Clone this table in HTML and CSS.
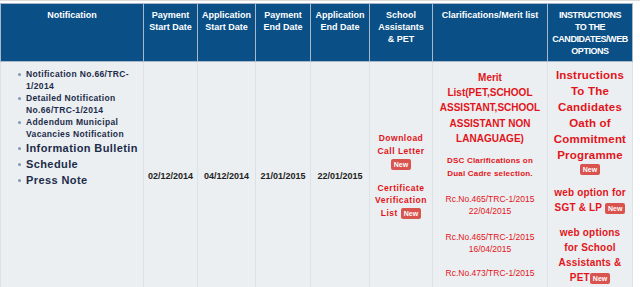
FILE: index.html
```html
<!DOCTYPE html>
<html>
<head>
<meta charset="utf-8">
<title>TRC-1/2014 Notification</title>
<link rel="stylesheet" href="styles.css">
</head>
<body>
<div class="page">
  <table class="grid">
    <colgroup>
      <col class="c-notif">
      <col class="c-pstart">
      <col class="c-astart">
      <col class="c-pend">
      <col class="c-aend">
      <col class="c-school">
      <col class="c-clar">
      <col class="c-instr">
    </colgroup>
    <thead>
      <tr>
        <th>Notification</th>
        <th>Payment<br>Start Date</th>
        <th>Application<br>Start Date</th>
        <th>Payment<br>End Date</th>
        <th>Application<br>End Date</th>
        <th>School<br>Assistants<br>&amp; PET</th>
        <th>Clarifications/Merit list</th>
        <th class="th-caps">INSTRUCTIONS<br>TO THE<br>CANDIDATES/WEB<br>OPTIONS</th>
      </tr>
    </thead>
    <tbody>
      <tr>
        <td class="notif">
          <ul class="notif-list">
            <li class="sm">Notification No.66/TRC-<br>1/2014</li>
            <li class="sm">Detailed Notification<br>No.66/TRC-1/2014</li>
            <li class="sm">Addendum Municipal<br>Vacancies Notification</li>
            <li class="lg">Information Bulletin</li>
            <li class="lg">Schedule</li>
            <li class="lg">Press Note</li>
          </ul>
        </td>
        <td class="date">02/12/2014</td>
        <td class="date">04/12/2014</td>
        <td class="date">21/01/2015</td>
        <td class="date">22/01/2015</td>
        <td class="school">
          <p class="sa sa-first">Download<br>Call Letter<br><span class="new">New</span></p>
          <p class="sa sa-second">Certificate<br>Verification<br>List <span class="new">New</span></p>
        </td>
        <td class="clar">
          <p class="merit">Merit<br>List(PET,SCHOOL<br>ASSISTANT,SCHOOL<br>ASSISTANT NON<br>LANAGUAGE)</p>
          <p class="dsc">DSC Clarifications on<br>Dual Cadre selection.</p>
          <p class="rc">Rc.No.465/TRC-1/2015<br>22/04/2015</p>
          <p class="rc rc-2">Rc.No.465/TRC-1/2015<br>16/04/2015</p>
          <p class="rc">Rc.No.473/TRC-1/2015</p>
        </td>
        <td class="instr">
          <p class="ins-main">Instructions<br>To The<br>Candidates<br>Oath of<br>Commitment<br>Programme<br><span class="badge-line"><span class="new">New</span></span></p>
          <p class="web">web option for<br>SGT &amp; LP <span class="new">New</span></p>
          <p class="web">web options<br>for School<br>Assistants &amp;<br>PET<span class="new">New</span></p>
        </td>
      </tr>
    </tbody>
  </table>
</div>
</body>
</html>
```

FILE: styles.css
```css
html, body {
  margin: 0;
  padding: 0;
  background: #ffffff;
  font-family: "Liberation Sans", Arial, sans-serif;
}

.page {
  padding-top: 2px;
  width: 640px;
  border-top: 1px solid #dcdcdc;
  box-sizing: border-box;
}

.grid {
  border-collapse: collapse;
  table-layout: fixed;
  width: 632px;
}

.c-notif { width: 143px; }
.c-pstart { width: 54px; }
.c-astart { width: 58px; }
.c-pend { width: 55px; }
.c-aend { width: 59px; }
.c-school { width: 63px; }
.c-clar { width: 115px; }
.c-instr { width: 85px; }

.grid th {
  background: #0a4f86;
  color: #ffffff;
  font-size: 9px;
  font-weight: bold;
  line-height: 12px;
  padding: 5px 1px 4px;
  height: 48px;
  vertical-align: top;
  text-align: center;
  border: 1px solid #a8b8c8;
}

.grid th.th-caps {
  letter-spacing: -0.45px;
}

.grid td {
  background: #ebeff1;
  border: 1px solid #dce2e5;
  vertical-align: middle;
  text-align: center;
  padding: 0 3px;
}

/* notification list */
.grid td.notif {
  vertical-align: top;
  text-align: left;
  padding: 6px 0 0 0;
}

.notif-list {
  list-style: none;
  margin: 0;
  padding: 0 0 0 25px;
  color: #1c2c4a;
  font-weight: bold;
}

.notif-list li {
  position: relative;
}

.notif-list li::before {
  content: "";
  position: absolute;
  left: -8px;
  width: 3px;
  height: 3px;
  border-radius: 50%;
  background: #7f98b3;
}

.notif-list li.sm {
  font-size: 8.5px;
  line-height: 12px;
  letter-spacing: 0.35px;
}

.notif-list li.sm::before {
  top: 5px;
}

.notif-list li.lg {
  font-size: 11px;
  line-height: 16px;
  letter-spacing: 0.4px;
}

.notif-list li.lg::before {
  top: 7px;
}

/* dates */
.grid td.date {
  font-size: 9px;
  font-weight: bold;
  color: #222222;
  padding: 0;
}

/* red links */
.sa, .merit, .dsc, .rc, .ins-main, .web {
  margin: 0;
  color: #e3141a;
  font-weight: bold;
}

.sa {
  font-size: 8.5px;
  letter-spacing: 0.5px;
  line-height: 13px;
}

.sa-second {
  margin-top: 11px;
  line-height: 12.5px;
}

.grid td.clar {
  vertical-align: top;
  padding: 8px 2px 0;
}

.merit {
  font-size: 10px;
  line-height: 15.2px;
}

.dsc {
  font-size: 8px;
  letter-spacing: 0.2px;
  line-height: 13px;
  margin-top: 8px;
}

.rc {
  font-size: 8.5px;
  font-weight: normal;
  line-height: 12px;
  margin-top: 12.5px;
}

.rc-2 {
  margin-top: 14px;
}

.grid td.instr {
  vertical-align: top;
  padding: 5px 2px 4px;
}

.ins-main {
  font-size: 11.5px;
  letter-spacing: 0.2px;
  line-height: 16px;
}

.badge-line {
  display: block;
  line-height: 12px;
}

.web {
  font-size: 10px;
  letter-spacing: 0.2px;
  line-height: 15px;
  margin-top: 10px;
}

.new {
  display: inline-block;
  background: #d9534f;
  color: #ffffff;
  font-size: 7px;
  font-weight: bold;
  letter-spacing: 0;
  line-height: 9px;
  padding: 1px 3px;
  border-radius: 2px;
  vertical-align: middle;
}
```
